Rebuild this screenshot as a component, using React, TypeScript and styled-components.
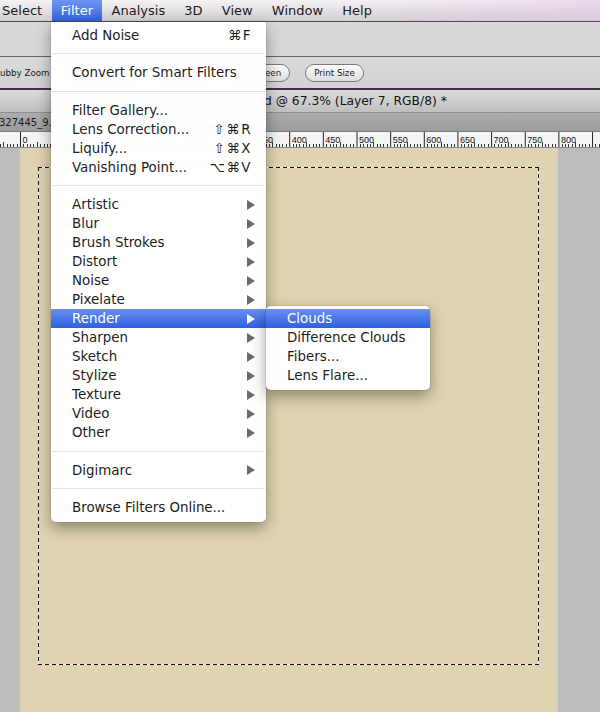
import React from "react";
import styled, { createGlobalStyle } from "styled-components";

const Global = createGlobalStyle`
  html, body {
    margin: 0;
    padding: 0;
    width: 600px;
    height: 712px;
    overflow: hidden;
    background: #bebebe;
  }
  body {
    font-family: "DejaVu Sans", "Noto Sans", sans-serif;
    -webkit-font-smoothing: antialiased;
  }
`;

const Screen = styled.div`
  position: relative;
  width: 600px;
  height: 712px;
  display: flex;
  flex-direction: column;
  overflow: hidden;
`;

/* ---------- top menu bar ---------- */
const MenuBar = styled.div`
  height: 21px;
  flex: none;
  border-bottom: 1px solid #4e4e4e;
  background: linear-gradient(to right, rgba(255, 255, 255, 0) 55%, rgba(228, 190, 228, 0.45) 100%),
    linear-gradient(#f4f2f4, #d2cfd3);
  overflow: hidden;
`;

const MenuTitles = styled.div`
  display: flex;
  height: 100%;
  margin-left: -7.5px;
`;

const MenuTitle = styled.div<{ $active?: boolean }>`
  display: flex;
  align-items: center;
  padding: 0 ${(p) => (p.$active ? "9px" : "9.6px")};
  font-size: 13px;
  color: ${(p) => (p.$active ? "#ffffff" : "#1b1b1b")};
  background: ${(p) => (p.$active ? "linear-gradient(#7096f3, #3463e2)" : "transparent")};
  white-space: nowrap;
`;

/* ---------- option bars ---------- */
const OptionsTop = styled.div`
  height: 34px;
  flex: none;
  background: #d8d8d8;
  border-bottom: 1px solid #676767;
`;

const OptionsBar = styled.div`
  height: 31px;
  flex: none;
  background: linear-gradient(#dadada, #d2d2d2);
  border-bottom: 2px solid #4a2c4a;
  display: flex;
  align-items: center;
  gap: 15px;
  font-size: 8.7px;
  color: #1a1a1a;
  white-space: nowrap;
`;

const OptionLabel = styled.span`
  margin-left: 0;
`;

const Pill = styled.div`
  height: 16px;
  padding: 0 8px;
  display: flex;
  align-items: center;
  border: 1px solid #7a7a7a;
  border-radius: 9px;
  background: linear-gradient(#fbfbfb, #dedede);
  box-shadow: inset 0 1px 0 #fff;
  font-size: 8.7px;
  color: #1a1a1a;
`;

/* ---------- document window chrome ---------- */
const TitleBar = styled.div`
  height: 22px;
  flex: none;
  border-bottom: 1px solid #8e8e8e;
  background: linear-gradient(#dcdcdc, #bfbfbf);
  display: flex;
  align-items: center;
  justify-content: center;
  font-size: 12.3px;
  color: #151515;
  white-space: nowrap;
`;

const TabStrip = styled.div`
  height: 18px;
  flex: none;
  border-bottom: 1px solid #7c7c7c;
  background: linear-gradient(#acacac, #9c9c9c);
  display: flex;
  align-items: center;
  font-size: 10px;
  color: #1c1c1c;
  white-space: nowrap;
`;

const TabName = styled.span`
  margin-left: -1px;
  margin-top: 1px;
`;

const RulerBar = styled.div`
  height: 16px;
  flex: none;
  background: #f4f4f4;
  border-bottom: 1px solid #8a8a8a;
  box-sizing: border-box;
  overflow: hidden;
`;

/* ---------- workspace ---------- */
const Workspace = styled.div`
  flex: 1;
  display: flex;
  background: #bdbdbd;
`;

const Gutter = styled.div`
  width: 20px;
  flex: none;
`;

const Canvas = styled.div`
  width: 538px;
  flex: none;
  box-sizing: border-box;
  background: #e0d3b1;
  border-left: 2px solid #dad3ab;
  border-right: 2px solid #d9d1b6;
  padding: 19px 0 0 16px;
`;

const Marquee = styled.div`
  width: 501px;
  height: 498px;
  box-sizing: border-box;
  background:
    repeating-linear-gradient(90deg, #111 0 4px, #f7f2e4 4px 7px) top left / 100% 1px no-repeat,
    repeating-linear-gradient(90deg, #111 0 4px, #f7f2e4 4px 7px) bottom left / 100% 1px no-repeat,
    repeating-linear-gradient(180deg, #111 0 4px, #f7f2e4 4px 7px) top left / 1px 100% no-repeat,
    repeating-linear-gradient(180deg, #111 0 4px, #f7f2e4 4px 7px) top right / 1px 100% no-repeat;
`;

/* ---------- menus ---------- */
const DropMenu = styled.div`
  position: absolute;
  left: 51px;
  top: 22px;
  width: 215px;
  box-sizing: border-box;
  padding: 3.5px 0 5px;
  background: rgba(255, 255, 255, 0.985);
  border-radius: 0 0 5px 5px;
  box-shadow: 0 6px 16px rgba(0, 0, 0, 0.38), 0 0 0 1px rgba(0, 0, 0, 0.07);
  z-index: 10;
`;

const SubMenu = styled.div`
  position: absolute;
  left: 266px;
  top: 306px;
  width: 164px;
  box-sizing: border-box;
  padding: 3px 0 5px;
  background: rgba(255, 255, 255, 0.985);
  border-radius: 5px;
  box-shadow: 0 6px 16px rgba(0, 0, 0, 0.38), 0 0 0 1px rgba(0, 0, 0, 0.07);
  z-index: 11;
  overflow: hidden;
`;

const Item = styled.div<{ $active?: boolean }>`
  height: 19px;
  display: flex;
  align-items: center;
  justify-content: space-between;
  padding: 0 15px 0 21px;
  font-size: 13.4px;
  color: ${(p) => (p.$active ? "#ffffff" : "#1d1d1d")};
  background: ${(p) => (p.$active ? "linear-gradient(#6a8ff1, #2f5fe1)" : "transparent")};
  white-space: nowrap;
`;

const Shortcut = styled.span`
  letter-spacing: 1.5px;
  margin-right: -1px;
`;

const Arrow = styled.span<{ $active?: boolean }>`
  width: 0;
  height: 0;
  margin-right: -4px;
  border-top: 5px solid transparent;
  border-bottom: 5px solid transparent;
  border-left: 8px solid ${(p) => (p.$active ? "#ffffff" : "#6b6b6b")};
`;

const Separator = styled.div`
  height: 18.5px;
  display: flex;
  align-items: center;
  padding: 0 1px;
  &::after {
    content: "";
    flex: 1;
    height: 1px;
    background: #e3e3e3;
  }
`;

/* ---------- ruler drawing ---------- */
const Ruler: React.FC = () => {
  const origin = 20;
  const step = 33.65;
  const ticks: React.ReactNode[] = [];
  for (let k = -1; k <= 17; k++) {
    const x0 = origin + k * step;
    ticks.push(<line key={`M${k}`} x1={x0 + 0.5} x2={x0 + 0.5} y1={0} y2={16} stroke="#222" strokeWidth={1} />);
    if (k >= 0 && k <= 16) {
      ticks.push(
        <text key={`T${k}`} x={x0 + 2.5} y={10.5} fontSize={9} fontFamily="'Liberation Sans', Arial, sans-serif" fill="#111">
          {k * 50}
        </text>
      );
    }
    for (let i = 1; i < 10; i++) {
      const x = Math.round(x0 + (i * step) / 10) + 0.5;
      const h = i === 5 ? 5 : 3;
      ticks.push(<line key={`m${k}-${i}`} x1={x} x2={x} y1={15 - h} y2={15} stroke="#333" strokeWidth={1} />);
    }
  }
  return (
    <svg width="600" height="15" viewBox="0 0 600 15" style={{ display: "block" }}>
      {ticks}
    </svg>
  );
};

type Entry =
  | { kind: "sep" }
  | { kind: "item"; label: string; shortcut?: string; sub?: boolean; active?: boolean };

const filterEntries: Entry[] = [
  { kind: "item", label: "Add Noise", shortcut: "⌘F" },
  { kind: "sep" },
  { kind: "item", label: "Convert for Smart Filters" },
  { kind: "sep" },
  { kind: "item", label: "Filter Gallery..." },
  { kind: "item", label: "Lens Correction...", shortcut: "⇧⌘R" },
  { kind: "item", label: "Liquify...", shortcut: "⇧⌘X" },
  { kind: "item", label: "Vanishing Point...", shortcut: "⌥⌘V" },
  { kind: "sep" },
  { kind: "item", label: "Artistic", sub: true },
  { kind: "item", label: "Blur", sub: true },
  { kind: "item", label: "Brush Strokes", sub: true },
  { kind: "item", label: "Distort", sub: true },
  { kind: "item", label: "Noise", sub: true },
  { kind: "item", label: "Pixelate", sub: true },
  { kind: "item", label: "Render", sub: true, active: true },
  { kind: "item", label: "Sharpen", sub: true },
  { kind: "item", label: "Sketch", sub: true },
  { kind: "item", label: "Stylize", sub: true },
  { kind: "item", label: "Texture", sub: true },
  { kind: "item", label: "Video", sub: true },
  { kind: "item", label: "Other", sub: true },
  { kind: "sep" },
  { kind: "item", label: "Digimarc", sub: true },
  { kind: "sep" },
  { kind: "item", label: "Browse Filters Online..." },
];

const renderEntries = ["Clouds", "Difference Clouds", "Fibers...", "Lens Flare..."];

const menuTitles = ["Select", "Filter", "Analysis", "3D", "View", "Window", "Help"];

export default function App() {
  return (
    <>
      <Global />
      <Screen>
        <MenuBar>
          <MenuTitles>
            {menuTitles.map((t) => (
              <MenuTitle key={t} $active={t === "Filter"}>
                {t}
              </MenuTitle>
            ))}
          </MenuTitles>
        </MenuBar>
        <OptionsTop />
        <OptionsBar>
          <OptionLabel>ubby Zoom</OptionLabel>
          <Pill>Actual Pixels</Pill>
          <Pill>Fit Screen</Pill>
          <Pill>Fill Screen</Pill>
          <Pill>Print Size</Pill>
        </OptionsBar>
        <TitleBar>clouds_background @ 67.3% (Layer 7, RGB/8) *</TitleBar>
        <TabStrip>
          <TabName>327445_9.psd</TabName>
        </TabStrip>
        <RulerBar>
          <Ruler />
        </RulerBar>
        <Workspace>
          <Gutter />
          <Canvas>
            <Marquee />
          </Canvas>
        </Workspace>

        <DropMenu>
          {filterEntries.map((e, i) =>
            e.kind === "sep" ? (
              <Separator key={i} />
            ) : (
              <Item key={i} $active={e.active}>
                <span>{e.label}</span>
                {e.shortcut && <Shortcut>{e.shortcut}</Shortcut>}
                {e.sub && <Arrow $active={e.active} />}
              </Item>
            )
          )}
        </DropMenu>

        <SubMenu>
          {renderEntries.map((label, i) => (
            <Item key={label} $active={i === 0}>
              <span>{label}</span>
            </Item>
          ))}
        </SubMenu>
      </Screen>
    </>
  );
}
